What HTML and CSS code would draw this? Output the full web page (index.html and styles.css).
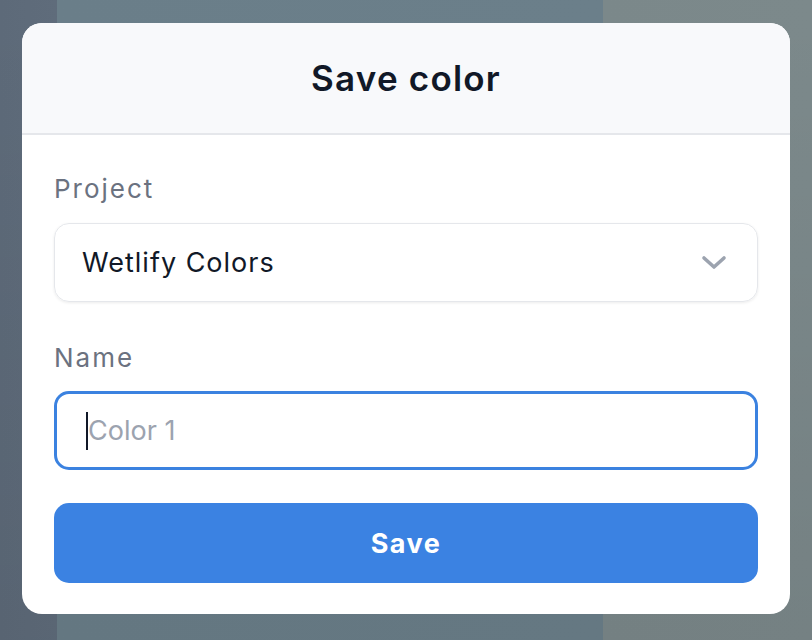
FILE: index.html
```html
<!DOCTYPE html>
<html>
<head>
<meta charset="utf-8">
<link rel="stylesheet" href="styles.css">
</head>
<body>
<div class="modal">
  <div class="modal-header">
    <h1 class="modal-title">Save color</h1>
  </div>
  <div class="modal-body">
    <label class="field-label">Project</label>
    <div class="select">
      <span class="select-value">Wetlify Colors</span>
      <svg class="chevron" width="26" height="16" viewBox="0 0 26 16"><path d="M3 3 L13 12 L23 3" fill="none" stroke="#9ca3af" stroke-width="3.6" stroke-linecap="round" stroke-linejoin="round"/></svg>
    </div>
    <label class="field-label label-name">Name</label>
    <div class="input">
      <span class="caret"></span><span class="placeholder">Color 1</span>
    </div>
    <button class="save-btn">Save</button>
  </div>
</div>
</body>
</html>
```
FILE: styles.css
```css
html, body {
  margin: 0;
  padding: 0;
}
body {
  width: 812px;
  height: 640px;
  overflow: hidden;
  font-family: "Inter", "Noto Sans", sans-serif;
  background:
    linear-gradient(180deg, rgba(0,0,0,0) 0%, rgba(0,0,0,0.06) 100%),
    linear-gradient(90deg, #5d6a79 0, #5f6c7b 57px, #6a7e89 57px, #6b7f8a 603px, #7b888a 603px, #7c898b 812px);
  display: flex;
  flex-direction: column;
}
.modal {
  margin: 23px 22px 0 22px;
  width: 768px;
  height: 591px;
  background: #ffffff;
  border-radius: 20px;
  overflow: hidden;
  display: flex;
  flex-direction: column;
}
.modal-header {
  height: 110px;
  background: #f8f9fb;
  border-bottom: 2px solid #e5e7eb;
  display: flex;
  align-items: center;
  justify-content: center;
}
.modal-title {
  margin: 0;
  font-size: 35px;
  font-weight: 600;
  color: #111827;
  letter-spacing: 1.2px;
}
.modal-body {
  padding: 36px 32px 0 32px;
  display: flex;
  flex-direction: column;
}
.field-label {
  font-size: 26px;
  line-height: 36px;
  color: #6b7280;
  font-weight: 400;
  letter-spacing: 2px;
}
.label-name {
  margin-top: 38px;
}
.select {
  margin-top: 16px;
  height: 77px;
  border: 1px solid #e5e7eb;
  border-radius: 15px;
  box-shadow: 0 1px 3px rgba(0,0,0,0.08);
  display: flex;
  align-items: center;
  justify-content: space-between;
  padding: 0 30px 0 27px;
}
.select-value {
  font-size: 27px;
  color: #111827;
  letter-spacing: 1px;
}
.chevron {
  display: block;
}
.input {
  margin-top: 15px;
  height: 73px;
  border: 3px solid #3b82e0;
  border-radius: 15px;
  display: flex;
  align-items: center;
  padding: 0 29px;
}
.caret {
  width: 2px;
  height: 38px;
  background: #111827;
}
.placeholder {
  font-size: 27px;
  color: #9ca3af;
}
.save-btn {
  margin-top: 33px;
  height: 80px;
  border: none;
  border-radius: 15px;
  background: #3b82e2;
  color: #ffffff;
  font-family: inherit;
  font-size: 27px;
  font-weight: 700;
  letter-spacing: 1.5px;
}
```
